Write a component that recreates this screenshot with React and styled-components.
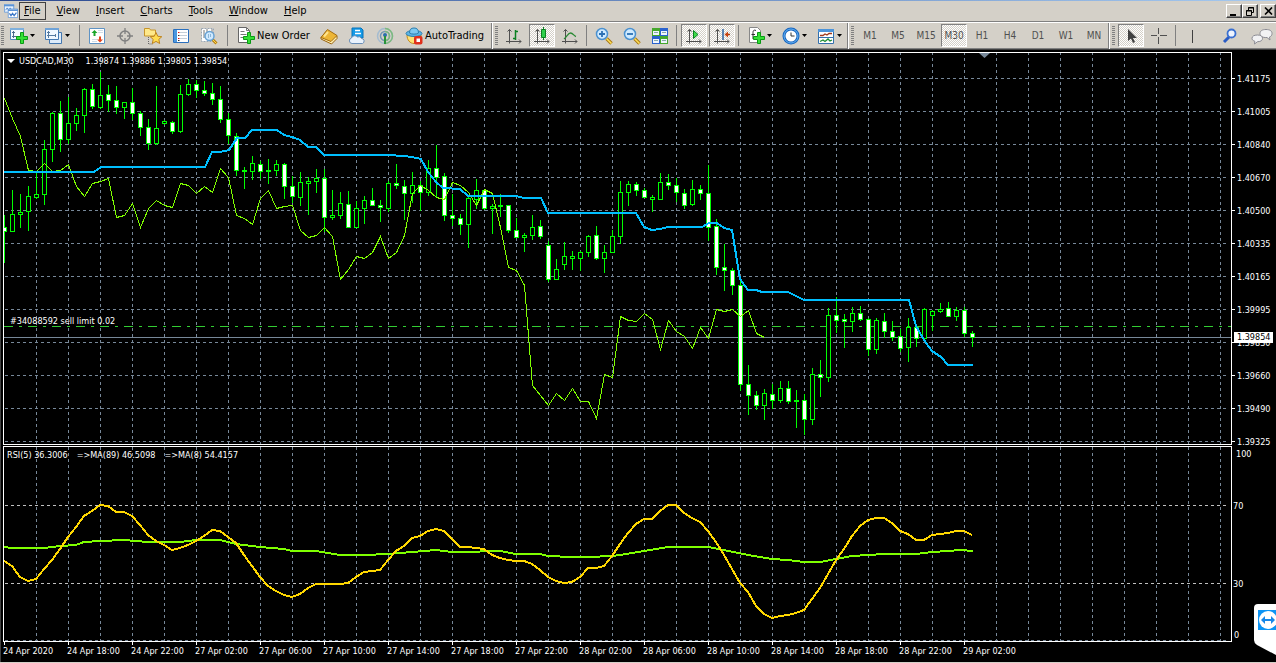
import styled, { createGlobalStyle } from "styled-components";

const GlobalStyle = createGlobalStyle`
    * {
        box-sizing: border-box;
    }
    body {
        margin: 0;
        background-color: #000;
        font-family: "DejaVu Sans Condensed", "Noto Sans", sans-serif;
        font-size: 11px;
        line-height: 14px;
        color: #000;
    }
    button {
        font: inherit;
        color: inherit;
    }
`

const Page = styled.div`
    position: relative;
    display: flex;
    flex-direction: column;
    overflow: hidden;
    border-bottom: 1px solid #d4d0c8;
`

const TitleStrip = styled.div`
    height: 1px;
    background: linear-gradient(to right, #2c4a90, #a6caf0);
`

const MenuBar = styled.header`
    height: 21px;
    padding-left: 4px;
    display: flex;
    align-items: center;
    background-color: #d4d0c8;
    border-bottom: 1px solid #808080;
`

const Menu = styled.nav`
    display: flex;
    gap: 6px;
    margin-left: 1px;
`

const MenuItem = styled.button`
    height: 18px;
    padding: 0 4px;
    border: 1px solid ${(props) => (props.$active ? "#404040" : "transparent")};
    background: none;
    line-height: 14px;
`

const WindowButtons = styled.div`
    display: flex;
    margin-left: auto;
`

const WindowButton = styled.button`
    width: 16px;
    height: 14px;
    padding: 0;
    margin-left: ${(props) => (props.$spaced ? "2px" : "0")};
    display: flex;
    align-items: center;
    justify-content: center;
    background-color: #d4d0c8;
    border: 1px solid;
    border-color: #fff #404040 #404040 #fff;
    box-shadow: inset -1px -1px 0 #808080;
`

const Toolbars = styled.div`
    height: 28px;
    display: flex;
    background-color: #d4d0c8;
    border-top: 1px solid #fff;
    border-bottom: 1px solid #404040;
    box-shadow: inset 0 -1px 0 #808080;
`

const ToolGroup = styled.div`
    display: flex;
    align-items: center;
    padding-bottom: 1px;
    border-left: ${(props) => (props.$first ? "none" : "1px solid #fff")};
    border-right: ${(props) => (props.$last ? "none" : "1px solid #808080")};
    flex: ${(props) => (props.$last ? "1" : "none")};
`

const Grip = styled.span`
    width: 3px;
    height: 20px;
    margin: ${(props) => (props.$first ? "0 1px" : "0 2px")};
    background: repeating-linear-gradient(#808080 0 1px, #d4d0c8 1px 2px);
`

const Divider = styled.span`
    width: 1px;
    height: 21px;
    margin: ${(props) => (props.$wide ? "0 3px 0 4px" : "0 3px 0 2px")};
    background-color: #808080;
`

const ToolButton = styled.button`
    width: 26px;
    height: 23px;
    margin: 0 1px;
    padding: 0;
    display: flex;
    align-items: center;
    justify-content: center;
    color: #505050;
    border: 1px solid;
    border-color: ${(props) => (props.$pressed ? "#808080 #fff #fff #808080" : "transparent")};
    background: ${(props) =>
        props.$pressed
            ? "repeating-conic-gradient(#fff 0 25%, #d4d0c8 0 50%) 0 0 / 2px 2px"
            : "none"};
`

const TimeButton = styled(ToolButton)`
    font-size: 10px;
`

const SplitButton = styled.button`
    width: 35px;
    height: 23px;
    padding: 0 5px;
    display: flex;
    align-items: center;
    justify-content: space-between;
    border: none;
    background: none;
`

const TextButton = styled.button`
    width: ${(props) => props.$width};
    height: 23px;
    padding: 0 4px 0 6px;
    display: flex;
    align-items: center;
    gap: 2px;
    border: none;
    background: none;
    white-space: nowrap;
`

const RightTools = styled.div`
    display: flex;
    gap: 4px;
    margin-left: auto;
`

const Workspace = styled.main`
    padding: 2px 0 0 2px;
    background-color: #000;
    border-left: 1px solid #404040;
    color: #fff;
    font-size: 9px;
    line-height: 12px;
`

const Pane = styled.section`
    display: grid;
    grid-template-columns: minmax(0, 1fr) 44px;
    margin-bottom: 1px;
`

const Plot = styled.div`
    position: relative;
    border: 1px solid #fff;
`

const PlotSvg = styled.svg`
    display: block;
    width: 100%;
    height: ${(props) => props.$height}px;
`

const PlotTitle = styled.div`
    position: absolute;
    top: 2px;
    left: 3px;
    display: flex;
    gap: ${(props) => props.$gap}px;
    white-space: nowrap;
`

const SymbolName = styled.span`
    display: flex;
    align-items: center;
    gap: 4px;
`

const OrderLabel = styled.div`
    position: absolute;
    top: 262px;
    left: 6px;
`

const PriceAxis = styled.ol`
    position: relative;
    margin: 0;
    padding: 10px 0 0;
    list-style: none;
`

const PriceMark = styled.li`
    height: 33px;
    display: flex;
    align-items: center;
    gap: 2px;

    &::before {
        content: "";
        width: 3px;
        height: 1px;
        background-color: #fff;
    }

    &:last-of-type {
        margin-bottom: -16px;
    }
`

const PriceTag = styled.output`
    position: absolute;
    top: 280px;
    left: 2px;
    padding: 0 3px;
    background-color: #fff;
    color: #000;
    line-height: 11px;
`

const RsiAxis = styled.ol`
    margin: 0;
    padding: 2px 0 0;
    list-style: none;
`

const RsiMark = styled.li`
    height: 12px;
    margin-bottom: ${(props) => props.$gap}px;
    padding-left: ${(props) => props.$indent}px;
`

const TimeAxis = styled.ol`
    height: 20px;
    margin: -1px 0 0;
    padding: 0;
    display: flex;
    list-style: none;
    overflow: hidden;
`

const TimeMark = styled.li`
    flex: 0 0 64px;
    white-space: nowrap;

    &::before {
        content: "";
        display: block;
        width: 1px;
        height: 3px;
        margin-left: 1px;
        background-color: #fff;
    }
`

const TeamViewer = styled.button`
    position: absolute;
    right: 0;
    bottom: 7px;
    padding: 0;
    border: none;
    background: none;

    svg {
        display: block;
    }
`

// [high, body top, body bottom, low, filled], one bar every 8px
const CANDLES = [
    [215, 227, 232, 263, 1], [190, 214, 232, 232, 0], [194, 212, 215, 228, 0], [186, 196, 212, 231, 0],
    [172, 194, 198, 199, 0], [140, 149, 195, 205, 0], [112, 113, 150, 162, 0], [101, 113, 140, 152, 1],
    [97, 123, 140, 144, 0], [108, 115, 124, 131, 0], [88, 89, 116, 133, 0], [84, 89, 107, 109, 1],
    [72, 95, 108, 109, 0], [85, 94, 101, 112, 1], [86, 100, 108, 114, 1], [102, 102, 108, 119, 0],
    [88, 102, 114, 120, 1], [111, 113, 128, 136, 1], [119, 127, 144, 150, 1], [86, 128, 144, 145, 0],
    [120, 121, 124, 125, 0], [121, 122, 132, 134, 1], [85, 94, 132, 133, 0], [79, 84, 95, 96, 0],
    [80, 84, 91, 98, 1], [81, 90, 94, 96, 1], [83, 93, 100, 105, 1], [86, 99, 120, 123, 1],
    [113, 119, 136, 144, 1], [133, 136, 171, 176, 1], [167, 170, 172, 189, 0], [156, 163, 172, 180, 0],
    [161, 164, 172, 179, 1], [159, 170, 172, 184, 0], [160, 164, 171, 176, 0], [163, 164, 187, 199, 1],
    [176, 186, 197, 203, 1], [172, 182, 198, 206, 0], [177, 181, 184, 215, 0], [169, 178, 182, 193, 0],
    [169, 178, 218, 232, 1], [190, 215, 218, 220, 0], [192, 203, 216, 219, 0], [191, 204, 228, 228, 1],
    [201, 208, 228, 228, 0], [196, 200, 209, 224, 0], [188, 200, 206, 206, 1], [200, 205, 208, 222, 1],
    [181, 183, 209, 212, 0], [164, 183, 186, 189, 1], [180, 186, 194, 220, 1], [172, 185, 194, 203, 0],
    [181, 185, 193, 211, 1], [160, 168, 193, 196, 0], [145, 168, 178, 197, 1], [173, 176, 216, 221, 1],
    [194, 215, 219, 226, 1], [214, 218, 225, 235, 1], [197, 198, 225, 248, 0], [179, 190, 200, 209, 0],
    [190, 190, 209, 210, 1], [204, 206, 209, 234, 0], [194, 205, 207, 217, 0], [205, 205, 231, 233, 1],
    [218, 230, 238, 238, 1], [233, 235, 238, 252, 0], [215, 227, 236, 240, 0], [220, 226, 237, 239, 1],
    [241, 245, 280, 282, 1], [259, 269, 280, 280, 0], [242, 256, 265, 270, 0], [251, 256, 259, 270, 0],
    [251, 252, 259, 271, 0], [235, 236, 253, 257, 0], [226, 235, 259, 260, 1], [245, 252, 259, 273, 0],
    [230, 236, 253, 253, 0], [181, 192, 237, 244, 0], [181, 184, 193, 206, 0], [182, 184, 191, 196, 1],
    [188, 190, 198, 198, 1], [195, 197, 200, 212, 0], [173, 182, 200, 200, 0], [174, 182, 186, 190, 1],
    [178, 185, 193, 202, 1], [189, 193, 206, 209, 1], [180, 189, 205, 206, 0], [185, 189, 194, 200, 1],
    [165, 193, 228, 241, 1], [219, 226, 268, 275, 1], [244, 267, 271, 291, 1], [268, 270, 286, 295, 1],
    [278, 285, 385, 391, 1], [365, 384, 396, 415, 1], [391, 395, 406, 410, 1], [389, 393, 406, 420, 0],
    [384, 394, 401, 409, 1], [381, 388, 401, 403, 0], [381, 388, 402, 404, 1], [390, 400, 402, 428, 0],
    [394, 400, 420, 435, 1], [368, 374, 420, 425, 0], [360, 374, 378, 397, 1], [308, 315, 378, 382, 0],
    [297, 315, 321, 333, 1], [314, 319, 322, 348, 1], [307, 313, 322, 332, 0], [306, 313, 320, 321, 1],
    [318, 319, 350, 356, 1], [318, 320, 350, 354, 0], [313, 321, 332, 338, 1], [321, 331, 338, 341, 1],
    [329, 336, 349, 352, 1], [318, 327, 348, 362, 0], [326, 327, 339, 347, 1], [308, 309, 339, 340, 0],
    [310, 311, 316, 331, 0], [303, 309, 312, 313, 0], [302, 308, 317, 317, 1], [307, 310, 317, 321, 0],
    [307, 310, 334, 337, 1], [331, 333, 338, 347, 1],
]

// lagging line, shifted back, one value per bar
const LAGGING = [
    98, 118, 136, 170, 171, 163, 171, 170, 164, 186, 196, 183, 181, 178, 217, 215, 203, 227, 208, 200,
    205, 207, 183, 185, 193, 186, 192, 168, 177, 215, 218, 224, 198, 190, 208, 206, 205, 230, 237, 235,
    227, 236, 279, 269, 256, 258, 252, 236, 258, 252, 235, 193, 185, 190, 197, 199, 182, 185, 192, 205,
    189, 193, 227, 267, 270, 285, 385, 395, 405, 393, 400, 388, 401, 401, 418, 374, 377, 316, 320, 321,
    313, 319, 349, 320, 331, 336, 348, 327, 338, 309, 311, 309, 316, 310, 333, 337,
]

const RSI_MA8 = [
    561, 566, 577, 581, 579, 569, 560, 549, 537, 527, 516, 511, 505, 506, 512, 512, 516, 525, 535, 541,
    545, 550, 548, 545, 541, 536, 530, 531, 537, 543, 555, 566, 577, 586, 591, 595, 597, 594, 588, 584,
    584, 584, 584, 583, 577, 572, 571, 570, 560, 551, 546, 538, 536, 531, 529, 531, 539, 547, 547, 548,
    549, 555, 558, 560, 561, 561, 564, 570, 577, 581, 583, 582, 577, 568, 568, 566, 556, 544, 533, 524,
    519, 519, 511, 505, 505, 513, 518, 522, 531, 542, 555, 569, 583, 592, 606, 614, 618, 616, 615, 613,
    610, 599, 588, 574, 560, 549, 536, 526, 520, 518, 518, 523, 531, 534, 540, 540, 535, 534, 533, 531,
    531, 535,
]

const BASE_LINE =
    "4,172 94,172 101,167 205,167 212,152 220,152 229,150 237,138 245,138 252,130 277,130 284,135 292,137 300,140 308,147 316,147 324,155 388,155 404,156 412,157 421,159 428,172 436,182 443,188 460,189 468,196 516,196 524,198 541,198 548,213 636,213 644,227 652,230 660,229 668,227 702,227 709,223 717,223 724,228 732,230 740,279 748,290 756,290 762,292 788,292 796,296 804,300 909,300 916,326 924,340 932,351 941,357 948,365 973,365"

const RSI_MA89 =
    "4,547 12,548 44,548 60,546 76,545 84,542 100,541 124,540 148,542 180,542 196,540 220,540 236,544 260,547 284,549 292,551 316,551 340,555 364,555 388,554 412,552 436,550 452,552 476,552 484,551 500,551 516,554 540,554 548,556 572,557 588,557 612,556 620,555 644,551 668,547 708,547 724,550 748,555 772,559 788,560 804,562 820,562 836,559 852,556 868,555 884,554 916,554 932,552 948,551 960,550 973,551"

const PRICES = [
    "1.41175", "1.41005", "1.40840", "1.40670", "1.40500", "1.40335",
    "1.40165", "1.39995", "1.39830", "1.39660", "1.39490", "1.39325",
]

const TIMES = [
    "24 Apr 2020", "24 Apr 18:00", "24 Apr 22:00", "27 Apr 02:00", "27 Apr 06:00", "27 Apr 10:00",
    "27 Apr 14:00", "27 Apr 18:00", "27 Apr 22:00", "28 Apr 02:00", "28 Apr 06:00", "28 Apr 10:00",
    "28 Apr 14:00", "28 Apr 18:00", "28 Apr 22:00", "29 Apr 02:00",
]

const MENUS = ["View", "Insert", "Charts", "Tools", "Window", "Help"]
const PERIODS = ["M1", "M5", "M15", "M30", "H1", "H4", "D1", "W1", "MN"]

const toPoints = (values) => values.map((y, i) => `${4 + i * 8},${y}`).join(" ")

const Grid = ({ top, height, levels }) => (
    <g stroke="#778899" strokeDasharray="3 3" shapeRendering="crispEdges">
        {Array.from({ length: 80 }, (_, i) => (
            <line key={i} x1={36.5 + i * 32} x2={36.5 + i * 32} y1={top} y2={top + height} />
        ))}
        {levels.map(([y, color]) => (
            <line key={y} x1="5" x2="100%" y1={y + 0.5} y2={y + 0.5} stroke={color} />
        ))}
    </g>
)

const Candles = () => (
    <g shapeRendering="crispEdges">
        {CANDLES.map(([high, top, bottom, low, filled], i) => {
            const x = 4 + i * 8
            return (
                <g key={i} fill="#00ff00">
                    <rect x={x} y={high} width="1" height={low - high} />
                    <rect x={x - 2} y={top} width="5" height={bottom - top} />
                    <rect
                        x={x - 1}
                        y={top + 1}
                        width="3"
                        height={Math.max(bottom - top - 2, 0)}
                        fill={filled ? "#fff" : "#000"}
                    />
                </g>
            )
        })}
    </g>
)

const Icon = ({ children, size = 18 }) => (
    <svg width={size} height={size} viewBox="0 0 18 18" fill="none" aria-hidden="true">
        {children}
    </svg>
)

const Arrow = () => (
    <svg width="5" height="3" viewBox="0 0 5 3" aria-hidden="true">
        <path d="M0 0h5L2.5 3z" fill="#000" />
    </svg>
)

const Plus = () => (
    <path d="M10.5 5.500h3v4h4v3h-4v4h-3v-4h-4v-3h4z" fill="#35e035" stroke="#0a9a14" />
)

const AppIcon = () => (
    <Icon size={14}>
        <path d="M.5.5h12v10H.5z" fill="#eaf4ff" stroke="#5b93d6" />
        <path d="M0 2h13" stroke="#5b93d6" strokeWidth="2" />
        <path d="M2 8l2-3 2 3 2-3 2 3" stroke="#3c78c8" />
        <path d="M5.5 6.500h12v11h-12z" fill="#fff" stroke="#5b93d6" />
        <path d="M5 8h13" stroke="#5b93d6" strokeWidth="2" />
        <path d="M7 12l2 3 2-3 2 3 3-4" stroke="#3c78c8" strokeWidth="1.5" />
    </Icon>
)

const NewChartIcon = () => (
    <Icon>
        <path d="M.5 1.500h13v11H.5z" fill="#f4f9ff" stroke="#4f86b8" />
        <path d="M0 2h14" stroke="#7fb0dc" strokeWidth="2" />
        <path d="M3.500 4v7M2 5.500h3M2 9.500h8" stroke="#4a6a8c" />
        <Plus />
    </Icon>
)

const ProfilesIcon = () => (
    <Icon>
        <path d="M4.500 5.500h12v11h-12z" fill="#dcebfa" stroke="#4377b0" />
        <path d="M.5 1.500h13v11H.5z" fill="#f0f7ff" stroke="#4377b0" />
        <path d="M0 2h14" stroke="#6fa3d8" strokeWidth="2" />
        <path d="M3.500 4v7M2 5.500h3M2 8.500h9M10.500 7v3" stroke="#55799f" />
    </Icon>
)

const MarketIcon = () => (
    <Icon>
        <path d="M1.5 1.500h15v15h-15z" fill="#fff" stroke="#5f93c4" />
        <path d="M4 12.500h5M10 5.500h5M4 14.500h5M10 3.500h5" stroke="#d0dce6" />
        <path d="M6.500 3l3 3h-2v3h-2V6h-2z" fill="#19a52a" />
        <path d="M12 15.500l-3-3h2v-3h2v3h2z" fill="#e2451e" />
    </Icon>
)

const TargetIcon = () => (
    <Icon>
        <circle cx="9" cy="9" r="5" stroke="#808080" strokeWidth="1.500" />
        <path d="M9 1v6M9 11v6M1 9h6M11 9h6" stroke="#808080" strokeWidth="1.300" />
    </Icon>
)

const NavigatorIcon = () => (
    <Icon>
        <path d="M.5 3V1.500h5l1 1.500h5v6H.5z" fill="#ffe98a" stroke="#c7952b" />
        <path d="M4.500 10v7h4" stroke="#666" strokeDasharray="1 1" />
        <path d="M12 5.500l1.800 3.800 4 .4-3 2.700.9 4.100-3.700-2.100-3.700 2.100.9-4.100-3-2.700 4-.4z" fill="#ffdc52" stroke="#bf8420" />
    </Icon>
)

const TerminalIcon = () => (
    <Icon>
        <path d="M1.5 2.500h15v13h-15z" fill="#fff" stroke="#2a6fbd" />
        <path d="M3.500 3v12" stroke="#4b98e0" strokeWidth="3" />
        <path d="M8 5.500h7M8 8.500h7M8 11.500h7" stroke="#c3ced8" />
        <path d="M6 5.500h1.500M6 11.500h1.500" stroke="#e01010" />
        <path d="M6 8.500h1.500M6 13.500h1.500" stroke="#333" />
    </Icon>
)

const TesterIcon = () => (
    <Icon>
        <path d="M1.5 1.500h12v13h-12z" fill="#fff" stroke="#9aa6b2" strokeDasharray="2 1" />
        <path d="M4 3v8M7 2v6M12 2v5" stroke="#777" />
        <path d="M12.500 12.500l4 4" stroke="#b98315" strokeWidth="3" />
        <path d="M12.500 12.500l4 4" stroke="#ffd94d" />
        <circle cx="9.500" cy="9" r="4.500" fill="#cfe9ff" stroke="#69a3d4" strokeWidth="1.500" />
        <path d="M8.500 7v4M10.500 7v3" stroke="#8db6d6" />
    </Icon>
)

const NewOrderIcon = () => (
    <Icon>
        <path d="M1.500.5h8l3 3v12h-11z" fill="#fff" stroke="#666" />
        <path d="M9.500.5v3h3M3.500 4.500h4M3.500 7.500h6M3.500 10.500h3" stroke="#777" />
        <Plus />
    </Icon>
)

const BookIcon = () => (
    <Icon>
        <path d="M1 10.500l6-7 10 5.500v2.500L11.500 17 1 12z" fill="#fff0b0" stroke="#99620f" />
        <path d="M1 10.500L7.500 2.500 17 8.500l-6 6z" fill="#edb637" stroke="#a46d12" />
        <path d="M4 9.500l4-4.500" stroke="#ffe48c" strokeWidth="2" />
    </Icon>
)

const ServerIcon = () => (
    <Icon>
        <path d="M4 1h9l2 2v8H4z" fill="#149ae8" stroke="#0872b8" />
        <path d="M7 3.500h5M7 6.500h6" stroke="#fff" strokeWidth="1.500" />
        <path d="M4 16.500a2.800 2.800 0 01-.5-5.500 3.500 3.500 0 016-1 3 3 0 014 1.500 2.600 2.600 0 011 5z" fill="#e9f2fc" stroke="#6a8fb8" />
    </Icon>
)

const SignalIcon = () => (
    <Icon>
        <circle cx="9" cy="9" r="7.500" stroke="#a5bcd0" strokeWidth="1.500" />
        <circle cx="9" cy="9" r="4.500" stroke="#7397b5" strokeWidth="1.500" />
        <path d="M9 1.500a7.500 7.500 0 010 15M9 4.500a4.500 4.500 0 010 9" stroke="#7dba7d" strokeWidth="1.500" />
        <circle cx="9" cy="8" r="2" fill="#2a70ad" />
        <path d="M9 9v8" stroke="#29933a" strokeWidth="2" />
    </Icon>
)

const AutoTradingIcon = () => (
    <Icon>
        <path d="M2 8c0 5 3 8.500 7 8.500s7-3.500 7-8.500z" fill="#ffe173" stroke="#c38b1b" />
        <ellipse cx="9" cy="6.500" rx="8" ry="3" fill="#5cb4e4" stroke="#2b7eb0" />
        <path d="M4.500 6C4.500 2.500 6 1 9 1s4.500 1.500 4.500 5c-2 1.500-7 1.500-9 0z" fill="#7cc8f0" stroke="#2b7eb0" />
        <rect x="9" y="9" width="8.500" height="8.500" rx="2" fill="#e0301c" />
        <rect x="11.500" y="11.500" width="3.500" height="3.500" fill="#fff" />
    </Icon>
)

const Axes = () => (
    <path d="M4.500 2.500v14M1 14.500h15M2.500 4.500l2-2 2 2M14 12.500l2 2-2 2" stroke="#505050" />
)

const BarsIcon = () => (
    <Icon>
        <Axes />
        <path d="M10.500 3v10M8 11.500h2.500M10.500 4.500H13" stroke="#0a8020" strokeWidth="1.500" />
    </Icon>
)

const CandlesIcon = () => (
    <Icon>
        <Axes />
        <path d="M10.500 0v13" stroke="#0a8020" />
        <path d="M8.500 2.500h4v8h-4z" fill="#2ed04a" stroke="#0a8020" />
    </Icon>
)

const LineIcon = () => (
    <Icon>
        <Axes />
        <path d="M3 12c3-2 4-6 6.500-6S13 9 15 9.500" stroke="#2a8a34" strokeWidth="1.300" />
    </Icon>
)

const ZoomIcon = ({ plus }) => (
    <Icon>
        <path d="M11.500 11.500l5 5" stroke="#a87813" strokeWidth="3.500" />
        <path d="M11.500 11.500l5 5" stroke="#ffe05a" strokeWidth="1.500" />
        <circle cx="7" cy="7" r="5.500" fill="#cfeaff" stroke="#4b91cf" strokeWidth="1.500" />
        <path d={plus ? "M7 4v6M4 7h6" : "M4 7h6"} stroke="#2c71b4" strokeWidth="1.800" />
    </Icon>
)

const TileIcon = () => (
    <Icon>
        <path d="M1 1h8v8H1zM9 9h8v8H9z" fill="#45a82d" />
        <path d="M9 1h8v8H9zM1 9h8v8H1z" fill="#2a63cf" />
        <path d="M2 4h6v4H2zM10 4h6v4h-6zM2 12h6v4H2zM10 12h6v4h-6z" fill="#eef5ff" />
        <path d="M3 5.500h4M11 5.500h4M3 13.500h4M11 13.500h4" stroke="#8aa" />
    </Icon>
)

const ScrollIcon = () => (
    <Icon>
        <Axes />
        <path d="M8.500 3.500v8l4.500-4z" fill="#3fdc4a" stroke="#0a8020" />
    </Icon>
)

const ShiftIcon = () => (
    <Icon>
        <Axes />
        <path d="M10 2v11" stroke="#2b62a0" strokeWidth="1.500" />
        <path d="M17 7.500h-4" stroke="#b03a0a" strokeWidth="1.500" />
        <path d="M15 4.500l-3.500 3 3.500 3z" fill="#c8430f" />
    </Icon>
)

const IndicatorIcon = () => (
    <Icon>
        <path d="M2.500.5h8l3 3v12h-11z" fill="#fff" stroke="#888" />
        <path d="M9 3.500c-2-1-3 0-3 2V12M4.500 7.500H8" stroke="#333" />
        <Plus />
    </Icon>
)

const ClockIcon = () => (
    <Icon>
        <circle cx="9" cy="9" r="8.500" fill="#1766c0" />
        <circle cx="9" cy="9" r="7" stroke="#67b3f4" />
        <circle cx="9" cy="9" r="5.500" fill="#fff" />
        <path d="M9 5.500V9h3.500" stroke="#333" />
    </Icon>
)

const TemplateIcon = () => (
    <Icon>
        <path d="M1.5 2.500h15v14h-15z" fill="#fff" stroke="#3470ad" />
        <path d="M1 3.500h16" stroke="#4c94da" strokeWidth="3" />
        <path d="M2 10.500h14" stroke="#3470ad" />
        <path d="M3 8.500h3l2-1.500 2 1 2-1.500h3" stroke="#a0391b" strokeWidth="1.300" />
        <path d="M3 14.500l3-1.500 2 1.500 3-2.500 2 2 2-1" stroke="#1f8e33" strokeWidth="1.300" />
    </Icon>
)

const CursorIcon = () => (
    <Icon>
        <path d="M6 2v12l3-2.500 2 4.500 2-1-2-4h4z" fill="#404040" />
    </Icon>
)

const CrosshairIcon = () => (
    <Icon>
        <path d="M8.500 1v6M8.500 10v7M1 8.500h6M10 8.500h7" stroke="#505050" />
    </Icon>
)

const VLineIcon = () => (
    <Icon>
        <path d="M8.500 3v13" stroke="#404040" />
    </Icon>
)

const SearchIcon = () => (
    <Icon>
        <path d="M8 10l-5 5" stroke="#2a5cc4" strokeWidth="3" />
        <circle cx="10.500" cy="6.500" r="4" fill="#eef4ff" stroke="#3a6fd0" strokeWidth="1.800" />
    </Icon>
)

const ChatIcon = () => (
    <svg width="22" height="18" viewBox="0 0 22 18" aria-hidden="true">
        <g fill="#f2f2f4" stroke="#8c8c94">
            <path d="M15 2.500c4 0 6 1.500 6 4 0 1.800-1 3-2.500 3.500l.5 3-3-2.500c-5 .3-7-1.500-7-4s2-4 6-4z" />
            <path d="M6.500 8c3.500 0 5 1.300 5 3.300s-1.500 3.400-5 3.400L3.500 17l.3-2.800C2 13.700 1 12.700 1 11.300 1 9.300 3 8 6.500 8z" />
        </g>
    </svg>
)

const leftTools = [
    ["Market Watch", MarketIcon],
    ["Data Window", TargetIcon],
    ["Navigator", NavigatorIcon],
    ["Terminal", TerminalIcon],
    ["Strategy Tester", TesterIcon],
]

const App = () => {
    return (
        <>
            <GlobalStyle />
            <Page>
                <TitleStrip />
                <MenuBar>
                    <AppIcon />
                    <Menu>
                        <MenuItem $active>
                            <u>F</u>ile
                        </MenuItem>
                        {MENUS.map((name) => (
                            <MenuItem key={name}>
                                <u>{name[0]}</u>
                                {name.slice(1)}
                            </MenuItem>
                        ))}
                    </Menu>
                    <WindowButtons>
                        <WindowButton aria-label="Minimize">
                            <svg width="10" height="9" viewBox="0 0 10 9">
                                <path d="M1 7h6v2H1z" />
                            </svg>
                        </WindowButton>
                        <WindowButton aria-label="Restore">
                            <svg width="10" height="9" viewBox="0 0 10 9" fill="none" stroke="#000">
                                <path d="M3.500 3V.5h5v5H7M3 1h6M1.500 3.500h5v5h-5zM1 4h6" />
                            </svg>
                        </WindowButton>
                        <WindowButton aria-label="Close" $spaced>
                            <svg width="9" height="8" viewBox="0 0 9 8" fill="none" stroke="#000">
                                <path d="M1 .5l7 7M8 .5l-7 7" strokeWidth="1.600" />
                            </svg>
                        </WindowButton>
                    </WindowButtons>
                </MenuBar>

                <Toolbars>
                    <ToolGroup $first>
                        <Grip $first />
                        <SplitButton aria-label="New chart">
                            <NewChartIcon />
                            <Arrow />
                        </SplitButton>
                        <SplitButton aria-label="Profiles">
                            <ProfilesIcon />
                            <Arrow />
                        </SplitButton>
                        <Divider $wide />
                        {leftTools.map(([label, ToolIcon]) => (
                            <ToolButton key={label} aria-label={label}>
                                <ToolIcon />
                            </ToolButton>
                        ))}
                        <Divider $wide />
                        <TextButton $width="84px">
                            <NewOrderIcon />
                            New Order
                        </TextButton>
                        <ToolButton aria-label="MetaEditor">
                            <BookIcon />
                        </ToolButton>
                        <ToolButton aria-label="Virtual hosting">
                            <ServerIcon />
                        </ToolButton>
                        <ToolButton aria-label="Signals">
                            <SignalIcon />
                        </ToolButton>
                        <TextButton $width="92px">
                            <AutoTradingIcon />
                            AutoTrading
                        </TextButton>
                    </ToolGroup>

                    <ToolGroup>
                        <Grip />
                        <ToolButton aria-label="Bar chart">
                            <BarsIcon />
                        </ToolButton>
                        <ToolButton aria-label="Candlesticks" $pressed>
                            <CandlesIcon />
                        </ToolButton>
                        <ToolButton aria-label="Line chart">
                            <LineIcon />
                        </ToolButton>
                        <Divider />
                        <ToolButton aria-label="Zoom in">
                            <ZoomIcon plus />
                        </ToolButton>
                        <ToolButton aria-label="Zoom out">
                            <ZoomIcon />
                        </ToolButton>
                        <ToolButton aria-label="Tile windows">
                            <TileIcon />
                        </ToolButton>
                        <Divider />
                        <ToolButton aria-label="Auto scroll" $pressed>
                            <ScrollIcon />
                        </ToolButton>
                        <ToolButton aria-label="Chart shift" $pressed>
                            <ShiftIcon />
                        </ToolButton>
                        <Divider />
                        <SplitButton aria-label="Indicators">
                            <IndicatorIcon />
                            <Arrow />
                        </SplitButton>
                        <SplitButton aria-label="Periods">
                            <ClockIcon />
                            <Arrow />
                        </SplitButton>
                        <SplitButton aria-label="Templates">
                            <TemplateIcon />
                            <Arrow />
                        </SplitButton>
                    </ToolGroup>

                    <ToolGroup>
                        <Grip />
                        {PERIODS.map((period) => (
                            <TimeButton key={period} $pressed={period === "M30"}>
                                {period}
                            </TimeButton>
                        ))}
                    </ToolGroup>

                    <ToolGroup $last>
                        <Grip />
                        <ToolButton aria-label="Cursor" $pressed>
                            <CursorIcon />
                        </ToolButton>
                        <ToolButton aria-label="Crosshair">
                            <CrosshairIcon />
                        </ToolButton>
                        <Divider />
                        <ToolButton aria-label="Vertical line">
                            <VLineIcon />
                        </ToolButton>
                        <RightTools>
                            <ToolButton aria-label="Search">
                                <SearchIcon />
                            </ToolButton>
                            <ToolButton aria-label="Chat">
                                <ChatIcon />
                            </ToolButton>
                        </RightTools>
                    </ToolGroup>
                </Toolbars>

                <Workspace>
                    <Pane>
                        <Plot>
                            <PlotSvg $height={391} fill="none">
                                <g transform="translate(-4 -53)">
                                    <Grid
                                        top={52}
                                        height={392}
                                        levels={PRICES.map((_, i) => [78 + i * 33, "#778899"])}
                                    />
                                    <g shapeRendering="crispEdges">
                                        <line x1="4" x2="200%" y1="337.5" y2="337.5" stroke="#778899" />
                                        <line x1="4" x2="200%" y1="326.5" y2="326.5" stroke="#32cd32" strokeDasharray="9 6 3 6" />
                                    </g>
                                    <Candles />
                                    <g shapeRendering="crispEdges">
                                        <polyline points={toPoints(LAGGING)} stroke="#7fff00" transform="translate(.5 .5)" />
                                        <polyline points={BASE_LINE} stroke="#00bfff" strokeWidth="2" />
                                    </g>
                                    <path d="M979 53h11l-5.500 5z" fill="#778899" />
                                </g>
                            </PlotSvg>
                            <PlotTitle $gap={12}>
                                <SymbolName>
                                    <svg width="8" height="4" viewBox="0 0 8 4">
                                        <path d="M0 0h8L4 4z" fill="#fff" />
                                    </svg>
                                    USDCAD,M30
                                </SymbolName>
                                <span>1.39874 1.39886 1.39805 1.39854</span>
                            </PlotTitle>
                            <OrderLabel>#34088592 sell limit 0.02</OrderLabel>
                        </Plot>
                        <PriceAxis>
                            {PRICES.map((price) => (
                                <PriceMark key={price}>{price}</PriceMark>
                            ))}
                            <PriceTag>1.39854</PriceTag>
                        </PriceAxis>
                    </Pane>

                    <Pane>
                        <Plot>
                            <PlotSvg $height={194} fill="none">
                                <g transform="translate(-4 -447)">
                                    <Grid
                                        top={447}
                                        height={194}
                                        levels={[[505, "#c0c0c0"], [583, "#c0c0c0"], [640, "#778899"]]}
                                    />
                                    <g strokeWidth="2" shapeRendering="crispEdges">
                                        <polyline points={RSI_MA89} stroke="#7fff00" />
                                        <polyline points={toPoints(RSI_MA8)} stroke="#ffd700" />
                                    </g>
                                </g>
                            </PlotSvg>
                            <PlotTitle $gap={9}>
                                <span>RSI(5) 36.3006</span>
                                <span>{"=>MA(89) 46.5098"}</span>
                                <span>{"=>MA(8) 54.4157"}</span>
                            </PlotTitle>
                        </Plot>
                        <RsiAxis>
                            <RsiMark $gap={40} $indent={4}>100</RsiMark>
                            <RsiMark $gap={66} $indent={1}>70</RsiMark>
                            <RsiMark $gap={39} $indent={1}>30</RsiMark>
                            <RsiMark $gap={0} $indent={2}>0</RsiMark>
                        </RsiAxis>
                    </Pane>

                    <TimeAxis>
                        {TIMES.map((time) => (
                            <TimeMark key={time}>{time}</TimeMark>
                        ))}
                    </TimeAxis>
                </Workspace>

                <TeamViewer aria-label="TeamViewer">
                    <svg width="22" height="51" viewBox="0 0 22 51">
                        <path d="M22 0H4Q0 0 0 4v32q0 3 3 5l19 10z" fill="#fff" />
                        <path d="M4 6h18v20H4z" fill="#0d94f4" />
                        <circle cx="14" cy="16" r="9" fill="#fff" />
                        <path d="M7 16l4-4v3h6v-3l4 4-4 4v-3h-6v3z" fill="#1787e8" />
                    </svg>
                </TeamViewer>
            </Page>
        </>
    )
}

export default App
